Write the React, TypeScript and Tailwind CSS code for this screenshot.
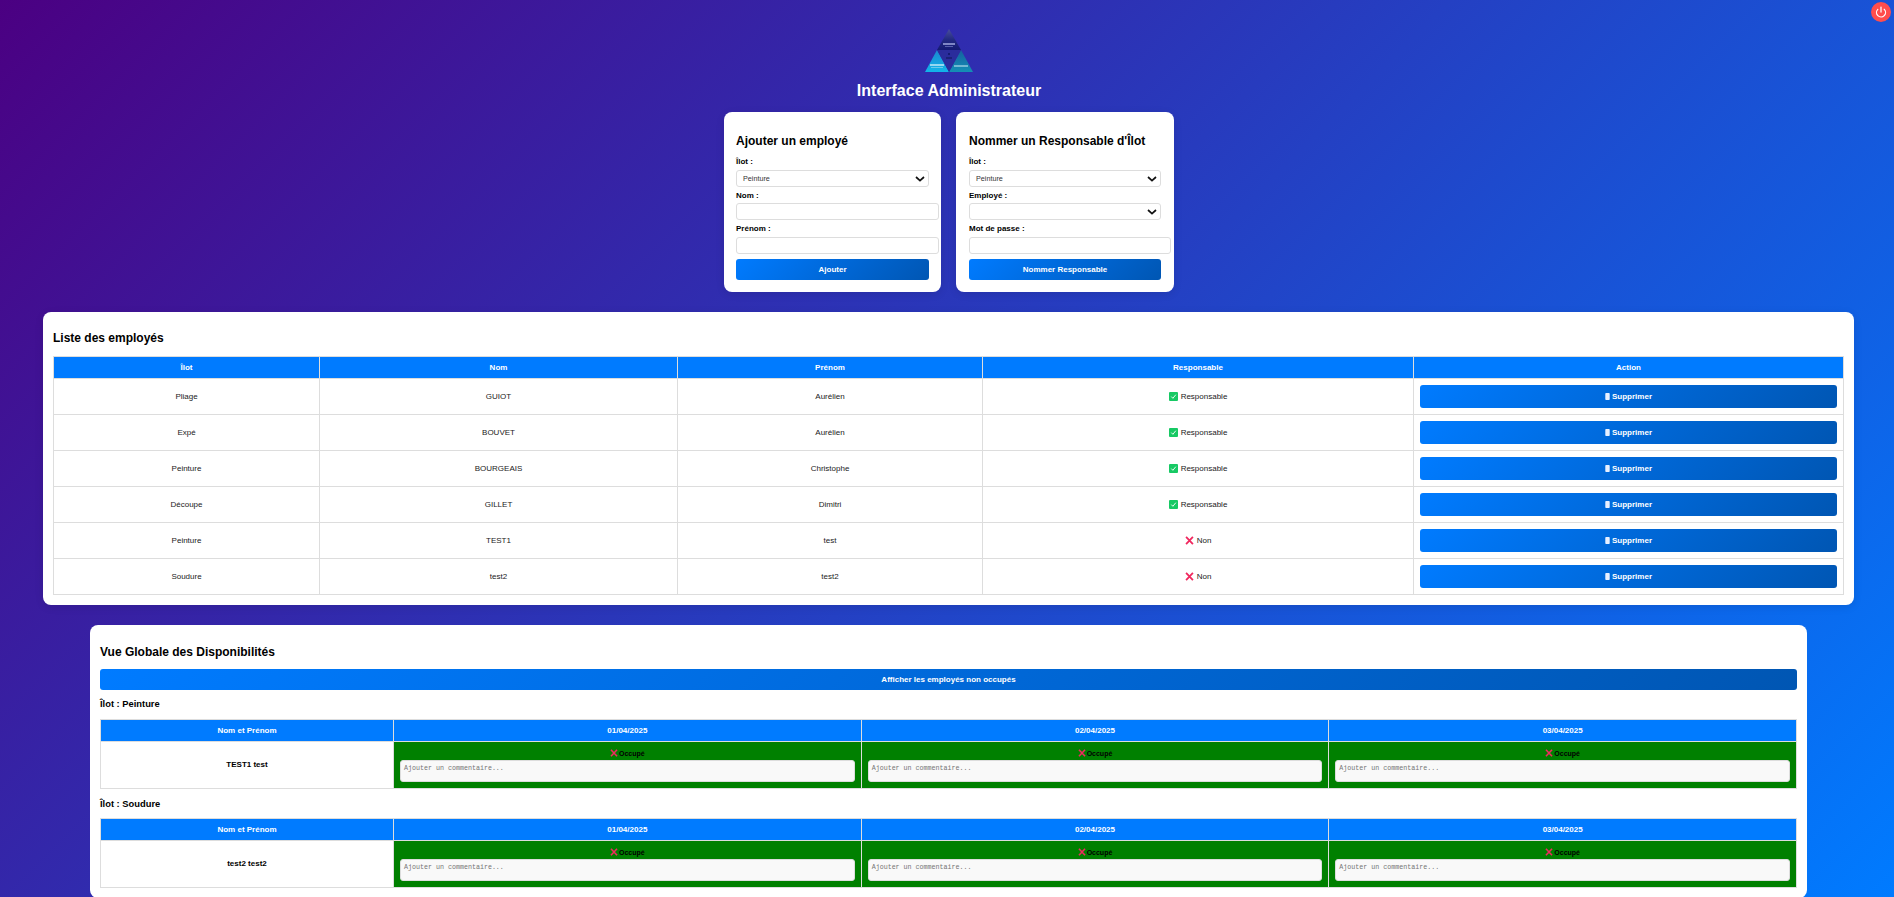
import React from 'react';
import { Power } from 'lucide-react';

const employes = [
  { ilot: 'Pliage', nom: 'GUIOT', prenom: 'Aurélien', resp: true },
  { ilot: 'Expé', nom: 'BOUVET', prenom: 'Aurélien', resp: true },
  { ilot: 'Peinture', nom: 'BOURGEAIS', prenom: 'Christophe', resp: true },
  { ilot: 'Découpe', nom: 'GILLET', prenom: 'Dimitri', resp: true },
  { ilot: 'Peinture', nom: 'TEST1', prenom: 'test', resp: false },
  { ilot: 'Soudure', nom: 'test2', prenom: 'test2', resp: false },
];

const dates = ['01/04/2025', '02/04/2025', '03/04/2025'];

const btn =
  'block w-full h-[21px] rounded-[3px] bg-[linear-gradient(135deg,#007bff,#0056b3)] text-white text-[8px] font-bold text-center';
const field = 'block h-[17px] bg-white border border-[#ddd] rounded-[3px]';
const label = 'block text-[8px] leading-[10px] font-bold text-black';
const th = 'bg-[#007bff] text-white text-[8px] font-bold border border-[#ddd] h-[22px] p-0 text-center';

const Logo = () => (
  <svg width="48" height="43" viewBox="0 0 48 43" className="block">
    <defs>
      <linearGradient id="t1" x1="0" y1="0" x2="0" y2="1">
        <stop offset="0" stopColor="#4a4f9c" />
        <stop offset="0.5" stopColor="#232a82" />
        <stop offset="1" stopColor="#141a72" />
      </linearGradient>
      <linearGradient id="t2" x1="0" y1="0" x2="0" y2="1">
        <stop offset="0" stopColor="#1c86cf" />
        <stop offset="1" stopColor="#12b5ea" />
      </linearGradient>
      <linearGradient id="t3" x1="0" y1="0" x2="0" y2="1">
        <stop offset="0" stopColor="#15609f" />
        <stop offset="1" stopColor="#148fb5" />
      </linearGradient>
    </defs>
    <path d="M24 0 L36 21 L12 21 Z" fill="url(#t1)" />
    <path d="M12 21 L24 43 L0 43 Z" fill="url(#t2)" />
    <path d="M36 21 L48 43 L24 43 Z" fill="url(#t3)" />
    <path d="M12 21 L36 21 L24 43 Z" fill="#2a2c9c" />
    <rect x="18" y="14" width="12" height="2" fill="#aab2e6" opacity="0.7" />
    <rect x="20" y="17" width="8" height="1" fill="#7f88cf" opacity="0.6" />
    <rect x="5" y="35" width="14" height="2" fill="#d8f3fb" opacity="0.65" />
    <rect x="6" y="38" width="12" height="1" fill="#bfe6f0" opacity="0.5" />
    <rect x="29" y="36" width="14" height="2" fill="#bfe6f0" opacity="0.55" />
    <rect x="23" y="24" width="2" height="2" fill="#141a72" />
    <rect x="21" y="28" width="6" height="2" fill="#1a2078" />
  </svg>
);

const Cross = ({ size = 9 }: { size?: number }) => (
  <svg width={size} height={size} viewBox="0 0 10 10" className="inline-block shrink-0">
    <path d="M1.2 1 L8.8 9 M8.8 1 L1.2 9" stroke="#f0295f" strokeWidth="2" />
  </svg>
);

const Check = () => (
  <svg width="9" height="9" viewBox="0 0 9 9" className="inline-block shrink-0">
    <rect width="9" height="9" rx="1" fill="#17c964" />
    <path d="M2.3 4.6 L3.9 6.3 L6.8 2.7" stroke="#fff" strokeWidth="0.9" fill="none" />
  </svg>
);

const Trash = () => (
  <svg width="5" height="7" viewBox="0 0 5 7" className="inline-block shrink-0">
    <rect x="0.3" y="0" width="4.4" height="7" rx="0.8" fill="#e8f0ff" />
  </svg>
);

const IlotSelect = ({ value }: { value?: string }) => (
  <div className="relative">
    <select defaultValue={value} className={`${field} w-full appearance-none text-[7.2px] text-[#333] pl-[6px] pt-[1px]`}>
      {value ? <option>{value}</option> : <option></option>}
    </select>
    <svg width="10" height="6" viewBox="0 0 10 6" className="absolute right-[4px] top-[5.5px] pointer-events-none">
      <path d="M1 1 L5 4.6 L9 1" stroke="#111" strokeWidth="1.7" fill="none" />
    </svg>
  </div>
);

const FormCard = ({ className, children }: { className: string; children: React.ReactNode }) => (
  <div className={`bg-white rounded-[8px] pt-[22px] pb-[12px] shadow-[0_2px_8px_rgba(0,0,0,0.1)] ${className}`}>
    {children}
  </div>
);

const DispoTable = ({ nom }: { nom: string }) => (
  <table className="w-full table-fixed border-collapse">
    <thead>
      <tr>
        <th className={`${th} w-[293px]`}>Nom et Prénom</th>
        {dates.map((d) => (
          <th key={d} className={th}>
            {d}
          </th>
        ))}
      </tr>
    </thead>
    <tbody>
      <tr>
        <td className="h-[47px] border border-[#ddd] text-center text-[8px] font-bold text-black p-0">{nom}</td>
        {dates.map((d) => (
          <td key={d} className="h-[47px] border border-[#ddd] bg-[#008000] px-[6px] pt-[6px] pb-[6px] align-top">
            <div className="flex items-center justify-center gap-[1px] text-[7px] leading-[9px] font-bold text-black h-[10px] mb-[2px]">
              <Cross size={8} />
              <span>Occupé</span>
            </div>
            <textarea
              readOnly
              placeholder="Ajouter un commentaire..."
              className="block w-full h-[22px] resize-none bg-[#f9f9f9] border border-[#ddd] rounded-[3px] px-[3px] py-[3px] font-['Liberation_Mono',monospace] text-[6.67px] leading-[8px] placeholder:text-[#757575]"
            />
          </td>
        ))}
      </tr>
    </tbody>
  </table>
);

export default function App() {
  return (
    <div className="relative h-screen overflow-hidden bg-[linear-gradient(135deg,#4b0082,#007bff)] font-['Liberation_Sans',Arial,sans-serif] pt-[29px]">
      <button className="absolute top-[2px] right-[3px] w-[20px] h-[20px] rounded-full bg-[#ff4d4d] flex items-center justify-center">
        <Power size={12} color="#fff" strokeWidth={2.5} />
      </button>

      <div className="flex justify-center pl-[4px]">
        <Logo />
      </div>
      <h1 className="mt-[9px] pl-[4px] text-[16px] leading-[20px] font-bold text-white text-center">Interface Administrateur</h1>

      <div className="mt-[11px] ml-[724px] flex gap-[15px]">
        <FormCard className="w-[217px] px-[12px]">
          <h2 className="text-[12px] leading-[14px] font-bold text-black mb-[9px]">Ajouter un employé</h2>
          <label className={`${label} mb-[3px]`}>Îlot :</label>
          <IlotSelect value="Peinture" />
          <label className={`${label} mt-[4px] mb-[2px]`}>Nom :</label>
          <input className={`${field} w-[203px]`} />
          <label className={`${label} mt-[4px] mb-[3px]`}>Prénom :</label>
          <input className={`${field} w-[203px]`} />
          <button className={`${btn} mt-[5px]`}>Ajouter</button>
        </FormCard>
        <FormCard className="w-[218px] px-[13px]">
          <h2 className="text-[12px] leading-[14px] font-bold text-black mb-[9px]">Nommer un Responsable d'Îlot</h2>
          <label className={`${label} mb-[3px]`}>Îlot :</label>
          <IlotSelect value="Peinture" />
          <label className={`${label} mt-[4px] mb-[2px]`}>Employé :</label>
          <IlotSelect />
          <label className={`${label} mt-[4px] mb-[3px]`}>Mot de passe :</label>
          <input type="password" className={`${field} w-[202px]`} />
          <button className={`${btn} mt-[5px]`}>Nommer Responsable</button>
        </FormCard>
      </div>

      <div className="mt-[20px] mx-[43px] w-[1811px] bg-white rounded-[8px] pt-[19px] px-[10px] pb-[10px] shadow-[0_2px_8px_rgba(0,0,0,0.1)]">
        <h2 className="text-[12px] leading-[14px] font-bold text-black mb-[11px]">Liste des employés</h2>
        <table className="w-full table-fixed border-collapse">
          <thead>
            <tr>
              <th className={`${th} w-[266px]`}>Îlot</th>
              <th className={`${th} w-[358px]`}>Nom</th>
              <th className={`${th} w-[305px]`}>Prénom</th>
              <th className={`${th} w-[431px]`}>Responsable</th>
              <th className={th}>Action</th>
            </tr>
          </thead>
          <tbody>
            {employes.map((e) => (
              <tr key={e.nom} className="text-[8px] text-[#222] text-center">
                <td className="h-[36px] border border-[#ddd] p-0">{e.ilot}</td>
                <td className="h-[36px] border border-[#ddd] p-0">{e.nom}</td>
                <td className="h-[36px] border border-[#ddd] p-0">{e.prenom}</td>
                <td className="h-[36px] border border-[#ddd] p-0">
                  <span className="inline-flex items-center gap-[3px] align-middle">
                    {e.resp ? <Check /> : <Cross size={9} />}
                    <span className="leading-[10px] pt-[1px]">{e.resp ? 'Responsable' : 'Non'}</span>
                  </span>
                </td>
                <td className="h-[36px] border border-[#ddd] px-[6px] py-0">
                  <button className="flex items-center justify-center gap-[2px] w-full h-[23px] rounded-[3px] bg-[linear-gradient(135deg,#007bff,#0056b3)] text-white text-[8px] font-bold">
                    <Trash />
                    <span>Supprimer</span>
                  </button>
                </td>
              </tr>
            ))}
          </tbody>
        </table>
      </div>

      <div className="mt-[20px] ml-[90px] w-[1717px] bg-white rounded-[8px] pt-[20px] px-[10px] pb-[10px]">
        <h2 className="text-[12px] leading-[14px] font-bold text-black mb-[10px]">Vue Globale des Disponibilités</h2>
        <button className={btn}>Afficher les employés non occupés</button>
        <h3 className="mt-[8px] mb-[9px] text-[9.36px] leading-[12px] font-bold text-black">Îlot : Peinture</h3>
        <DispoTable nom="TEST1 test" />
        <h3 className="mt-[9px] mb-[8px] text-[9.36px] leading-[12px] font-bold text-black">Îlot : Soudure</h3>
        <DispoTable nom="test2 test2" />
      </div>
    </div>
  );
}
